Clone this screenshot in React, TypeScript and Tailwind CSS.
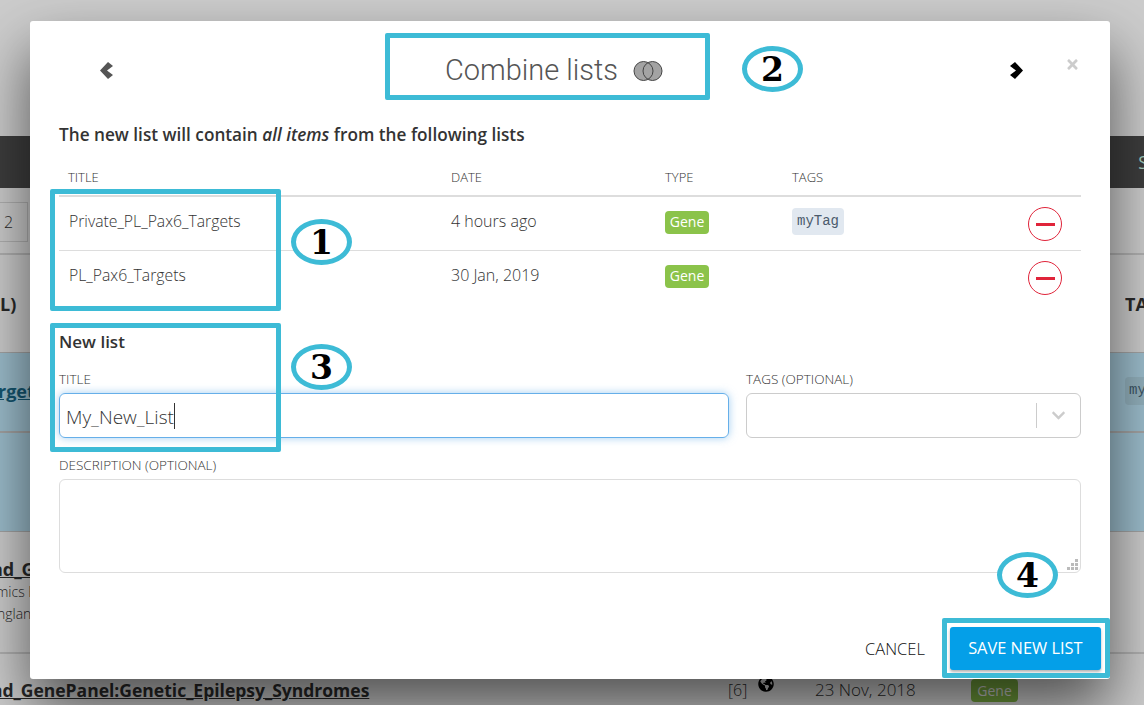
import { FaChevronDown, FaGlobeAmericas, FaTimes } from "react-icons/fa";

function Callout({ n, className }: { n: number; className: string }) {
  return (
    <div className={`absolute w-[61px] h-[46px] rounded-[50%] border-[5px] border-[#3dbbd6] bg-white flex items-center justify-center font-['DejaVu_Serif',serif] font-bold text-[33px] leading-none text-black ${className}`}>
      {n}
    </div>
  );
}

function Gene() {
  return <span className="inline-flex items-center justify-center w-[44px] h-[23px] rounded-[4px] bg-[#8bc34a] text-white text-[14px] font-normal leading-none">Gene</span>;
}

function MinusButton() {
  return (
    <div className="w-[34px] h-[34px] rounded-full border-[1.5px] border-[#e0243a] flex items-center justify-center">
      <div className="w-[19px] h-[3px] bg-[#e0243a]" />
    </div>
  );
}

function Venn() {
  return (
    <svg width="30" height="22" viewBox="0 0 30 22" className="ml-[15px] mt-[2px]">
      <circle cx="10.5" cy="11" r="9.5" fill="#a3a3a3" />
      <circle cx="19.5" cy="11" r="9.5" fill="#a3a3a3" />
      <circle cx="10.5" cy="11" r="9.5" fill="none" stroke="#444" strokeWidth="1" />
      <circle cx="19.5" cy="11" r="9.5" fill="none" stroke="#444" strokeWidth="1" />
    </svg>
  );
}

function Chevron({ right, className }: { right?: boolean; className: string }) {
  return (
    <svg width="14" height="17" viewBox="0 0 14 17" className={className} fill="currentColor">
      <polygon points={right ? "6,0 14,8.5 6,17 1,13 7,8.5 1,4" : "8,0 0,8.5 8,17 13,13 7,8.5 13,4"} />
    </svg>
  );
}

function ListRow({ title, date, tag, last }: { title: string; date: string; tag?: string; last?: boolean }) {
  return (
    <div className={`h-[54px] flex ${last ? "" : "border-b border-[#ddd]"}`}>
      <div className="w-[392px] pl-[10px] pt-[14px] text-[15.75px] leading-[20px]">{title}</div>
      <div className="w-[214px] pt-[14px] text-[16px] leading-[20px]">{date}</div>
      <div className="w-[127px] pt-[12px]"><Gene /></div>
      <div className="w-[236px] pt-[10px]">
        {tag && <span className="inline-flex items-center justify-center w-[52px] h-[27px] rounded-[4px] bg-[#e1e8f0] font-['Liberation_Mono',monospace] text-[14px] font-normal text-[#4a5a6c]">{tag}</span>}
      </div>
      <div className="pt-[10px]"><MinusButton /></div>
    </div>
  );
}

function BackgroundPage() {
  return (
    <div className="absolute inset-0 bg-white font-['Open_Sans',sans-serif] text-[#333] overflow-hidden">
      <div className="h-[136px]" />
      <div className="h-[52px] bg-[#4d4d4d] text-[#cfe] flex justify-end items-center text-[18px]">
        <span className="translate-x-[4px]">S</span>
      </div>
      <div className="h-[67px] border-b-2 border-[#ddd] flex items-start pt-[14px]">
        <div className="w-[28px] h-[40px] border-y border-r border-[#ddd] flex items-center pl-[4px] text-[16px] font-light">2</div>
      </div>
      <div className="h-[97px] flex justify-between items-center font-bold text-[18px] pt-[2px]">
        <span>L)</span>
        <span className="w-[19px] overflow-hidden">TAGS</span>
      </div>
      <div className="h-[180px] bg-[#c3edff] border-y border-[#ccc]">
        <div className="h-[80px] border-b-2 border-[#ccc] flex justify-between items-start">
          <span className="mt-[25px] font-bold text-[18px] text-[#1a6b8c] w-[30px] overflow-hidden"><span className="inline-block -ml-[2px] underline">rgets</span></span>
          <span className="mt-[24px] w-[19px] h-[28px] rounded-l-[4px] bg-[#b7dcec] overflow-hidden font-['Liberation_Mono',monospace] text-[14px] pl-[4px] pt-[3px] text-[#4a6a7c]">myTag</span>
        </div>
      </div>
      <div className="h-[122px] pt-[25px] border-b-2 border-[#ddd] w-full">
        <div className="w-[30px] overflow-hidden font-bold text-[18px] leading-[24px] whitespace-nowrap"><span className="inline-block -ml-[9px] underline">nd_Ge</span></div>
        <div className="w-[30px] overflow-hidden text-[14px] font-light leading-[22px] whitespace-nowrap"><span className="inline-block -ml-[4px]">mics England</span></div>
        <div className="w-[30px] overflow-hidden text-[14px] font-light leading-[22px] whitespace-nowrap"><span className="inline-block -ml-[3px]">nglan</span></div>
      </div>
      <div className="h-[51px] flex items-center pt-[21px] whitespace-nowrap">
        <span className="w-[728px] font-bold text-[17.5px] underline -ml-[9px] pl-0 shrink-0">nd_GenePanel:Genetic_Epilepsy_Syndromes</span>
        <span className="w-[30px] ml-[9px] text-[16px] font-light">[6]</span>
        <span className="w-[57px] pb-[12px]"><FaGlobeAmericas size={16} className="text-black" /></span>
        <span className="w-[156px] text-[17px] font-light">23 Nov, 2018</span>
        <span className="inline-flex items-center justify-center w-[47px] h-[23px] rounded-[4px] bg-[#8bc34a] text-white text-[14px]">Gene</span>
      </div>
    </div>
  );
}

export default function App() {
  return (
    <div className="relative w-[1144px] h-[705px] overflow-hidden font-['Open_Sans',sans-serif]">
      <BackgroundPage />
      <div className="absolute inset-0 bg-black/20" />

      {/* modal */}
      <div className="absolute left-[30px] top-[21px] w-[1080px] h-[658px] bg-white rounded-[3px] shadow-[0_30px_60px_rgba(0,0,0,0.6)] text-[#333] font-light">
        <div className="h-[90px] relative flex items-center justify-center pt-[8px]">
          <Chevron className="absolute left-[70px] top-[41px] text-[#555]" />
          <div className="flex items-center -translate-x-[16px] font-['Roboto',sans-serif] text-[#555] text-[29px] leading-none">
            Combine lists
            <Venn />
          </div>
          <Chevron right className="absolute left-[979px] top-[41px] text-black" />
          <FaTimes size={15} className="absolute left-[1035px] top-[36px] text-[#ccc]" />
        </div>

        <div className="pl-[29px] pr-[29px]">
          <p className="pt-[12px] text-[17.2px] leading-[24px] font-semibold">
            The new list will contain <em className="font-semibold">all items</em> from the following lists
          </p>

          <div className="mt-[24px] flex h-[26px] border-b-2 border-[#ddd] text-[13px] leading-[12px]">
            <div className="w-[392px] pl-[9px]">TITLE</div>
            <div className="w-[214px]">DATE</div>
            <div className="w-[127px]">TYPE</div>
            <div>TAGS</div>
          </div>
          <ListRow title="Private_PL_Pax6_Targets" date="4 hours ago" tag="myTag" />
          <ListRow title="PL_Pax6_Targets" date="30 Jan, 2019" last />

          <div className="mt-[25px] text-[17px] leading-[24px] font-semibold">New list</div>

          <div className="mt-[18px] flex gap-[17px]">
            <div className="w-[670px]">
              <div className="text-[13.5px] leading-[14px] h-[14px]">TITLE</div>
              <div className="mt-[7px] h-[45px] rounded-[6px] border border-[#66afe9] shadow-[0_0_8px_rgba(102,175,233,0.6)] flex items-center pl-[6px] text-[19px]">
                <span className="translate-y-[2px]">My_New_List</span><span className="w-px h-[26px] bg-[#333]" />
              </div>
            </div>
            <div className="w-[335px]">
              <div className="text-[13.5px] leading-[14px] h-[14px]">TAGS (OPTIONAL)</div>
              <div className="mt-[7px] h-[45px] rounded-[6px] border border-[#ccc] flex items-center justify-end">
                <span className="w-px h-[25px] bg-[#ccc]" />
                <span className="w-[43px] flex justify-center"><FaChevronDown size={15} className="text-[#ccc]" /></span>
              </div>
            </div>
          </div>

          <div className="mt-[20px] text-[13.5px] leading-[14px]">DESCRIPTION (OPTIONAL)</div>
          <div className="relative mt-[7px] h-[94px] rounded-[6px] border border-[#ddd]">
            <svg width="12" height="12" viewBox="0 0 12 12" className="absolute right-[1px] bottom-[1px]" fill="#bbb">
              <rect x="8" y="0" width="3" height="3" />
              <rect x="4" y="4" width="3" height="3" />
              <rect x="8" y="4" width="3" height="3" />
              <rect x="0" y="8" width="3" height="3" />
              <rect x="4" y="8" width="3" height="3" />
              <rect x="8" y="8" width="3" height="3" />
            </svg>
          </div>
        </div>

        <div className="absolute left-[835px] top-[606px] flex items-center gap-[25px]">
          <span className="text-[16.5px] text-[#111] font-light pt-[2px]">CANCEL</span>
          <button className="w-[151px] h-[43px] rounded-[3px] bg-[#049fe8] text-white text-[16.4px] font-normal shadow-[0_2px_3px_rgba(0,0,0,0.3)]">SAVE NEW LIST</button>
        </div>

        {/* tutorial annotations */}
        <div className="absolute left-[355px] top-[12px] w-[325px] h-[67px] border-[5px] border-[#3dbbd6] rounded-[2px]" />
        <div className="absolute left-[20px] top-[168px] w-[231px] h-[122px] border-[5px] border-[#3dbbd6] rounded-[2px]" />
        <div className="absolute left-[20px] top-[302px] w-[231px] h-[129px] border-[5px] border-[#3dbbd6] rounded-[2px]" />
        <div className="absolute left-[912px] top-[597px] w-[168px] h-[60px] border-[5px] border-[#3dbbd6] rounded-[2px]" />
        <Callout n={1} className="left-[261px] top-[198px]" />
        <Callout n={2} className="left-[712px] top-[25px]" />
        <Callout n={3} className="left-[261px] top-[323px]" />
        <Callout n={4} className="left-[967px] top-[531px]" />
      </div>
    </div>
  );
}
